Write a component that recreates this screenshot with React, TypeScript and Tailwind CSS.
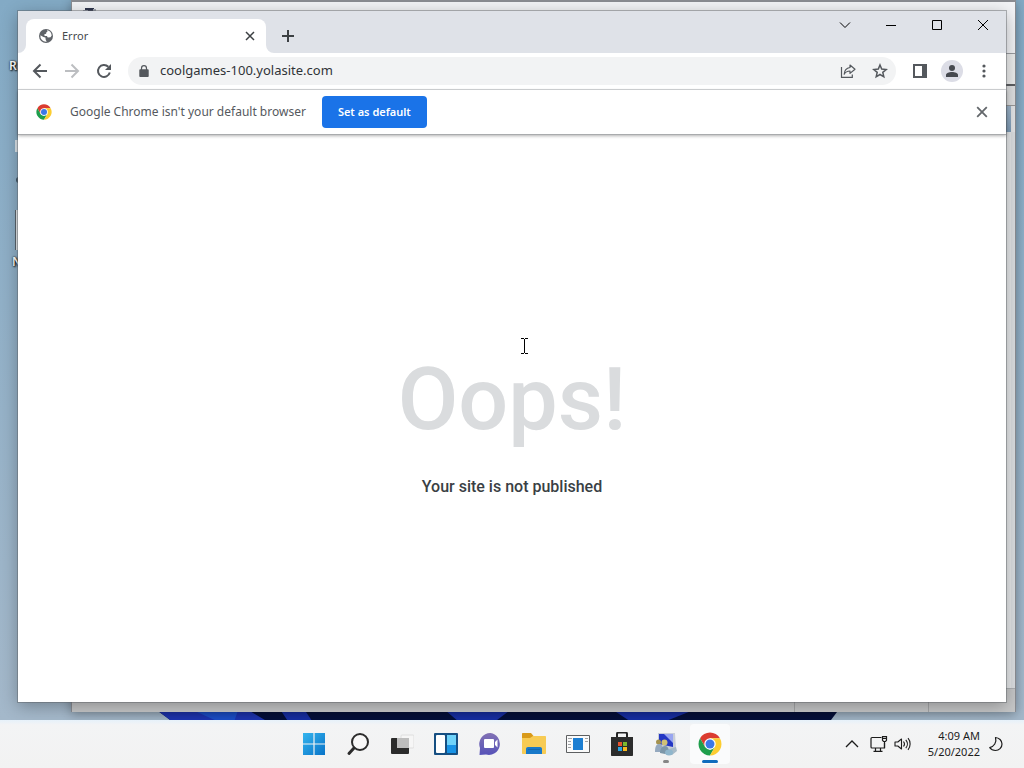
import React, { useState } from 'react';

const ChromeLogo: React.FC<{ className?: string }> = ({ className }) => (
  <svg viewBox="0 0 48 48" className={className} aria-hidden="true">
    <path d="M4.100 12.500A23 23 0 0 1 43.900 12.500H24L14 29.700z" fill="#db3c30" />
    <path d="M4.100 12.500L14 29.700 24 35.500l10-5.800L24 47A23 23 0 0 1 4.100 12.500z" fill="#1e9e4c" />
    <path d="M43.900 12.500A23 23 0 0 1 24 47l10-17.300L24 12.500z" fill="#fccd31" />
    <circle cx="24" cy="24" r="11.500" fill="#fff" />
    <circle cx="24" cy="24" r="9" fill="#3b78e7" />
  </svg>
);

const GlobeIcon = () => (
  <svg viewBox="0 0 16 16" className="h-4 w-4" aria-hidden="true">
    <circle cx="8" cy="8" r="7" fill="#5f6368" />
    <path d="M2.400 7.200L5.400 9l2 .6.300 2.200 1 1.900a5.700 5.700 0 0 1-6.300-6.500z" fill="#fff" />
    <path d="M8.800 2.300a5.700 5.700 0 0 1 4.900 5.200l-1.200 1.700-2.700.200-.900-1.300-2.300-.2-.300-1.700 1.800-.5.300-1.500 1.100-.500z" fill="#fff" />
  </svg>
);

const CloseIcon: React.FC<{ className?: string }> = ({ className }) => (
  <svg viewBox="0 0 10 10" className={className} fill="none" stroke="currentColor" aria-hidden="true">
    <path d="M1 1l8 8M9 1L1 9" />
  </svg>
);

const WindowControls = () => (
  <div className="flex h-7 text-black">
    <button aria-label="Search tabs" className="flex w-[46px] items-center justify-center">
      <svg viewBox="0 0 12 12" className="h-3 w-3" fill="none" stroke="currentColor">
        <path d="M1 3.500l5 5 5-5" />
      </svg>
    </button>
    <button aria-label="Minimize" className="flex w-[46px] items-center justify-center">
      <svg viewBox="0 0 12 12" className="h-3 w-3" stroke="currentColor">
        <path d="M1 6.500h10" />
      </svg>
    </button>
    <button aria-label="Maximize" className="flex w-[46px] items-center justify-center">
      <svg viewBox="0 0 12 12" className="h-3 w-3" fill="none" stroke="currentColor">
        <path d="M1.500 1.500h9v9h-9z" />
      </svg>
    </button>
    <button aria-label="Close" className="flex w-[46px] items-center justify-center">
      <svg viewBox="0 0 12 12" className="h-3 w-3" fill="none" stroke="currentColor">
        <path d="M1 1l10 10M11 1L1 11" />
      </svg>
    </button>
  </div>
);

const TabStrip = () => (
  <div className="flex h-[42px] shrink-0 items-start bg-[#dfe2e8] pl-2">
    <div className="relative mt-2 flex h-[34px] w-60 items-center rounded-t-lg bg-white px-3">
      <svg viewBox="0 0 8 8" className="absolute bottom-0 -left-2 h-2 w-2" fill="#fff">
        <path d="M8 0v8H0a8 8 0 0 0 8-8z" />
      </svg>
      <svg viewBox="0 0 8 8" className="absolute -right-2 bottom-0 h-2 w-2" fill="#fff">
        <path d="M0 0v8h8a8 8 0 0 1-8-8z" />
      </svg>
      <GlobeIcon />
      <span className="ml-2 flex-1 text-[11px] text-[#45494d]">Error</span>
      <button aria-label="Close tab" className="-mr-1 flex h-4 w-4 items-center justify-center text-[#3c4043]">
        <CloseIcon className="h-[10px] w-[10px] stroke-[1.5]" />
      </button>
    </div>
    <button aria-label="New tab" className="mt-[11px] ml-2 flex h-7 w-7 items-center justify-center text-[#3c4043]">
      <svg viewBox="0 0 14 14" className="h-[14px] w-[14px]" stroke="currentColor" strokeWidth="2">
        <path d="M7 1v12M1 7h12" />
      </svg>
    </button>
    <div className="flex-1" />
    <WindowControls />
  </div>
);

const Toolbar: React.FC = () => {
  const [url, setUrl] = useState('coolgames-100.yolasite.com');

  return (
    <div className="flex h-[37px] shrink-0 items-center border-b border-[#d5d7da] bg-white px-[6px] text-[#54585d]">
      <button aria-label="Back" className="flex w-8 justify-center">
        <svg viewBox="0 0 16 16" className="h-4 w-4" fill="none" stroke="currentColor" strokeWidth="2">
          <path d="M15 8H2.500M8.500 1.500L2 8l6.500 6.500" />
        </svg>
      </button>
      <button aria-label="Forward" className="flex w-8 justify-center text-[#bcbec1]">
        <svg viewBox="0 0 16 16" className="h-4 w-4" fill="none" stroke="currentColor" strokeWidth="2">
          <path d="M1 8h12.500M7.500 1.500L14 8l-6.500 6.500" />
        </svg>
      </button>
      <button aria-label="Reload" className="flex w-8 justify-center">
        <svg viewBox="0 0 16 16" className="h-4 w-4" fill="none" stroke="currentColor" strokeWidth="2">
          <path d="M13.800 9.600A6 6 0 1 1 12.300 3.800" />
          <path d="M15 1v6H9z" fill="currentColor" stroke="none" />
        </svg>
      </button>
      <div className="mx-2 flex h-7 flex-1 items-center rounded-full bg-[#f2f3f4]">
        <span className="flex w-8 justify-center">
          <svg viewBox="0 0 12 14" className="h-3 w-3" fill="currentColor" aria-hidden="true">
            <path d="M10.500 5H9.600V3.700a3.600 3.600 0 0 0-7.200 0V5h-.9C.9 5 .5 5.500.5 6v7c0 .6.4 1 1 1h9c.6 0 1-.4 1-1V6c0-.5-.4-1-1-1zM3.800 5V3.700a2.200 2.200 0 0 1 4.400 0V5z" />
          </svg>
        </span>
        <input
          type="text"
          aria-label="Address and search bar"
          value={url}
          onChange={(e) => setUrl(e.target.value)}
          className="min-w-0 flex-1 bg-transparent text-[13px] text-[#303438] outline-none"
        />
        <button aria-label="Share" className="flex w-8 justify-center">
          <svg viewBox="0 0 16 16" className="h-4 w-4" fill="none" stroke="currentColor" strokeWidth="1.200">
            <path d="M1.500 4v10.400h10.800V11.500" />
            <path d="M10 2l5 4.200-5 4.200V8C7.200 8 5.400 9 4.200 11.200 4.400 7.600 6.500 5 10 4.500z" strokeLinejoin="round" />
          </svg>
        </button>
        <button aria-label="Bookmark this tab" className="flex w-8 justify-center">
          <svg viewBox="0 0 16 16" className="h-4 w-4" fill="none" stroke="currentColor" strokeWidth="1.500">
            <path d="M8 2l1.700 4.100 4.500.4-3.400 2.900 1 4.400L8 11.500l-3.800 2.300 1-4.400L1.800 6.500l4.500-.4z" />
          </svg>
        </button>
      </div>
      <button aria-label="Side panel" className="flex w-8 justify-center">
        <svg viewBox="0 0 16 16" className="h-4 w-4" fill="none" stroke="currentColor" strokeWidth="2">
          <path d="M2 2h12v12H2z" />
          <path d="M10 2h4v12h-4z" fill="currentColor" stroke="none" />
        </svg>
      </button>
      <button aria-label="Profile" className="mx-[5px] flex h-[22px] w-[22px] items-center justify-center rounded-full bg-[#dcdde6]">
        <svg viewBox="0 0 14 14" className="h-[14px] w-[14px]" fill="#46494f">
          <circle cx="7" cy="4" r="3" />
          <path d="M1 13v-2c0-2 3-3 6-3s6 1 6 3v2z" />
        </svg>
      </button>
      <button aria-label="Menu" className="flex w-8 justify-center">
        <svg viewBox="0 0 16 16" className="h-4 w-4" fill="currentColor">
          <circle cx="8" cy="3" r="1.600" />
          <circle cx="8" cy="8" r="1.600" />
          <circle cx="8" cy="13" r="1.600" />
        </svg>
      </button>
    </div>
  );
};

const DefaultBrowserBar: React.FC<{ onClose: () => void }> = ({ onClose }) => (
  <div className="z-10 flex h-[45px] shrink-0 items-center border-b border-[#a9abad] bg-white px-[18px] text-[#55595e] shadow-[0_1px_3px_rgba(0,0,0,0.3)]">
    <ChromeLogo className="h-4 w-4" />
    <p className="ml-[18px] text-xs">Google Chrome isn't your default browser</p>
    <button className="ml-4 h-8 rounded bg-[#1a73e8] px-4 text-[11px] font-semibold text-white">Set as default</button>
    <div className="flex-1" />
    <button aria-label="Close infobar" onClick={onClose} className="flex h-3 w-3 items-center justify-center text-[#63676b]">
      <CloseIcon className="h-3 w-3 stroke-[1.5]" />
    </button>
  </div>
);

const BrowserWindow: React.FC = () => {
  const [showBar, setShowBar] = useState(true);

  return (
    <div className="absolute top-[11px] right-[18px] bottom-[18px] left-[18px] flex flex-col bg-white shadow-[0_0_0_1px_rgba(90,95,100,0.45),0_4px_16px_rgba(0,0,0,0.3)]">
      <TabStrip />
      <Toolbar />
      {showBar && <DefaultBrowserBar onClose={() => setShowBar(false)} />}
      <main className="relative flex flex-1 flex-col items-center justify-center gap-8 pt-4 font-['Roboto',sans-serif] font-medium">
        <h1 className="text-[88px] leading-[88px] text-[#dadcde]">Oops!</h1>
        <p className="text-base text-[#3a3f44]">Your site is not published</p>
        {/* text cursor */}
        <svg viewBox="0 0 8 16" className="absolute top-[203px] left-1/2 ml-2 h-4 w-2" fill="none" stroke="#000" shapeRendering="crispEdges">
          <path d="M1 .5h3M5 .5h3M4.500 1v14M1 15.500h3M5 15.500h3" />
        </svg>
      </main>
    </div>
  );
};

// Window that sits behind the browser, only its edges are visible
const BackWindow = () => (
  <div className="absolute top-0 right-2 bottom-2 left-[71px] flex flex-col border-t-2 border-r border-l border-[#8a8c92] bg-[#e4e6e8] shadow-[0_2px_10px_rgba(0,0,0,0.3)]">
    <div className="h-[52px] shrink-0 border-b border-[#9a9ca0] bg-[#f2f3f6] pl-[11px]">
      <svg viewBox="0 0 14 10" className="mt-[5px] h-[10px] w-[14px]">
        <path d="M2 1h9v3H2z" fill="#30364e" />
        <path d="M0 3h5v3H0z" fill="#9aa0ae" />
        <path d="M10 2h3v4h-3z" fill="#a5a9b4" />
      </svg>
    </div>
    <div className="h-[30px] shrink-0 bg-[#eceded]" />
    <div className="h-[22px] shrink-0 border-t-2 border-b border-t-[#5d5f62] border-b-[#999] bg-[#dfe0e1]" />
    <div className="mr-1 h-[26px] shrink-0 bg-linear-to-b from-[#9fb6cb] to-[#7f9db8]" />
    <div className="flex-1 border-r-4 border-[#dcdfe2] bg-[#e6e8ea]" />
    <div className="flex h-6 shrink-0 items-end border-t border-[#adb0b3] bg-[#c6c7c8]">
      <div className="h-[10px] flex-1 border-r border-[#a5a6a8]" />
      <div className="h-[10px] w-[134px] border-r border-[#a5a6a8]" />
      <div className="w-[86px]" />
    </div>
  </div>
);

const Desktop = () => (
  <div className="relative min-h-0 flex-1 overflow-hidden bg-linear-to-b from-[#83aac5] to-[#a4b8ca]">
    {/* wallpaper bloom */}
    <svg viewBox="0 0 680 12" preserveAspectRatio="none" className="absolute bottom-0 left-[15%] h-3 w-[67%]">
      <path d="M0 0h680l-9 12H16z" fill="#05103c" />
      <path d="M0 0h90l20 12H16z" fill="#1e35b4" />
      <path d="M34 0h50l-4 12H60z" fill="#1d50cc" />
      <path d="M124 0h24l8 12h-24zM286 0h70l-16 12h-40zM452 0h88l-30 12h-40z" fill="#1830a8" />
    </svg>
    {/* shortcuts mostly covered by the browser */}
    <div className="absolute top-[58px] left-[9px] text-xs leading-4 font-semibold text-white [text-shadow:0_0_2px_#000,1px_1px_2px_#000]">R</div>
    <div className="absolute top-[140px] left-[15px] h-3 w-1 bg-[#dce4ea]" />
    <div className="absolute top-[177px] left-4 h-[6px] w-[6px] rounded-full bg-[#3f5465]" />
    <div className="absolute top-[210px] left-[15px] h-10 w-4 border-l border-[#59636b] bg-[#e4e7ea]" />
    <div className="absolute top-[254px] left-[12px] text-xs leading-4 font-semibold text-white [text-shadow:0_0_2px_#000,1px_1px_2px_#000]">N</div>
    <BackWindow />
    <BrowserWindow />
  </div>
);

const StartIcon = () => (
  <svg viewBox="0 0 24 24" className="h-6 w-6">
    <defs>
      <linearGradient id="start" x1="0" y1="0" x2="1" y2="1">
        <stop offset="0" stopColor="#35b5ee" />
        <stop offset="1" stopColor="#0873c8" />
      </linearGradient>
    </defs>
    <path d="M1 1h22v22H1z" fill="url(#start)" />
    <path d="M12 0v24M0 12h24" stroke="#f3f3f3" strokeWidth="1.200" />
  </svg>
);

const SearchIcon = () => (
  <svg viewBox="0 0 24 24" className="h-6 w-6" fill="none" stroke="#2c2c2c" strokeLinecap="round">
    <circle cx="14" cy="10" r="8" strokeWidth="2" fill="#f8f8f8" />
    <path d="M8 16l-5 5.500" strokeWidth="3" />
  </svg>
);

const TaskViewIcon = () => (
  <svg viewBox="0 0 24 24" className="h-6 w-6">
    <rect x="11" y="3" width="13" height="13" rx="1" fill="#f6f6f6" stroke="#dedede" />
    <rect x="1" y="6" width="18" height="16" rx="1" fill="#2b2b2b" />
    <path d="M7 6h12v10H7z" fill="#bdbdbd" />
  </svg>
);

const WidgetsIcon = () => (
  <svg viewBox="0 0 24 24" className="h-6 w-6">
    <rect x="0" y="1" width="24" height="22" rx="1" fill="#164f82" />
    <rect x="2" y="3" width="9" height="18" rx="1" fill="#fff" />
    <path d="M13 3h9v10h-9z" fill="#6fd3fa" />
    <path d="M13 13h9v8h-9z" fill="#1893e6" />
  </svg>
);

const ChatIcon = () => (
  <svg viewBox="0 0 24 24" className="h-6 w-6">
    <defs>
      <linearGradient id="chat" x1="0" y1="0" x2="0" y2="1">
        <stop offset="0" stopColor="#8272b4" />
        <stop offset="1" stopColor="#5652b8" />
      </linearGradient>
    </defs>
    <path d="M12.500 1A11 11 0 1 1 8 22.500L1.500 23l.5-7A11 11 0 0 1 12.500 1z" fill="url(#chat)" />
    <rect x="6" y="7" width="10" height="9" rx="1" fill="#fff" />
    <path d="M17 10l2.500-2.500v8L17 13z" fill="#fff" />
  </svg>
);

const FolderIcon = () => (
  <svg viewBox="0 0 24 24" className="h-6 w-6">
    <path d="M0 2c0-.6.4-1 1-1h8l2.500 3v4H0z" fill="#d99a1a" />
    <path d="M0 6h8l3-2h12c.6 0 1 .4 1 1v16c0 .6-.4 1-1 1H1c-.6 0-1-.4-1-1z" fill="#f7cb54" />
    <path d="M4 22v-5c0-1.200.8-2 2-2h12c1.200 0 2 .8 2 2v5z" fill="#1879c9" />
    <path d="M6 17h12v1H6z" fill="#1668ad" />
  </svg>
);

const RunIcon = () => (
  <svg viewBox="0 0 24 24" className="h-6 w-6">
    <path d="M.5 3.500h23v17H.5z" fill="#fafafa" stroke="#5d5f61" />
    <path d="M7 6h10v12H7z" fill="#1c7ed2" />
    <path d="M2 6.500h4M2 9.500h3M2 12.500h3M2 15.500h3M19 6.500h3M19 9.500h3" stroke="#9fa2a5" />
  </svg>
);

const StoreIcon = () => (
  <svg viewBox="0 0 24 24" className="h-6 w-6">
    <path d="M7 7V2c0-1 .5-1.500 1.500-1.500h7C16.500.5 17 1 17 2v5" fill="none" stroke="#242424" strokeWidth="2" />
    <path d="M1 5h22v18c0 .6-.4 1-1 1H2c-.6 0-1-.4-1-1z" fill="#2c2c2c" />
    <path d="M8 10h4v4H8z" fill="#e8532e" />
    <path d="M13 10h4v4h-4z" fill="#7bb82e" />
    <path d="M8 15h4v4H8z" fill="#2ba3e2" />
    <path d="M13 15h4v4h-4z" fill="#f8b91f" />
  </svg>
);

const UsersIcon = () => (
  <svg viewBox="0 0 24 24" className="h-6 w-6">
    <path d="M4 1l17 0 1 16-6 2-12-5z" fill="#c8cdd8" />
    <path d="M5 2l14 0v13L5 12z" fill="#2437c4" />
    <path d="M10 2h9v9z" fill="#98a5f0" />
    <path d="M15 17l7-2 1 4-5 4-6-1z" fill="#a7bac7" />
    <circle cx="4.500" cy="10" r="2.500" fill="#a4924f" />
    <path d="M1 20c0-5 1-8 4-8s4 3 4 8z" fill="#95a9bf" />
    <circle cx="10.500" cy="10.500" r="3" fill="#d0c176" />
    <path d="M6 21c0-4 2-7 5-7s4 3 4 7l-4 1z" fill="#7d97a9" />
    <ellipse cx="15" cy="20.500" rx="4" ry="3" fill="#8fb6cc" />
  </svg>
);

const apps = [
  { name: 'Start', icon: <StartIcon /> },
  { name: 'Search', icon: <SearchIcon /> },
  { name: 'Task view', icon: <TaskViewIcon /> },
  { name: 'Widgets', icon: <WidgetsIcon /> },
  { name: 'Chat', icon: <ChatIcon /> },
  { name: 'File Explorer', icon: <FolderIcon /> },
  { name: 'Run', icon: <RunIcon /> },
  { name: 'Store', icon: <StoreIcon /> },
  { name: 'Users', icon: <UsersIcon />, running: true },
  { name: 'Google Chrome', icon: <ChromeLogo className="h-6 w-6" />, active: true },
];

const Taskbar = () => (
  <div className="flex h-12 shrink-0 items-center bg-linear-to-b from-[#e6f1fa] via-[#f3f4f5] via-10% to-[#f2f2f2] px-5">
    <div className="flex-1" />
    <div className="flex gap-1">
      {apps.map((app) => (
        <button
          key={app.name}
          aria-label={app.name}
          className={`relative flex h-10 w-10 items-center justify-center rounded ${app.active ? 'bg-[#fafbfc]' : ''}`}
        >
          {app.icon}
          {app.running && <span className="absolute bottom-px h-[3px] w-[6px] rounded-full bg-[#858585]" />}
          {app.active && <span className="absolute bottom-px h-[3px] w-4 rounded-full bg-[#0f6cbd]" />}
        </button>
      ))}
    </div>
    <div className="flex flex-1 items-center justify-end gap-2 text-[#1c1c1c]">
      <button aria-label="Show hidden icons" className="mr-[2px]">
        <svg viewBox="0 0 16 16" className="h-4 w-4" fill="none" stroke="currentColor" strokeWidth="1.300">
          <path d="M2 11l6-6 6 6" />
        </svg>
      </button>
      <button aria-label="Network and volume" className="mr-2 flex gap-[6px]">
        <svg viewBox="0 0 18 18" className="h-[18px] w-[18px]" fill="none" stroke="currentColor" strokeWidth="1.200">
          <path d="M11.500 2.500H2c-.6 0-1 .4-1 1V12c0 .6.400 1 1 1h12.500V8M5.500 13v3M10.500 13v3M3.500 16.400h9" />
          <path d="M12.500 1.600h4v3.600l-1 1.300h-2l-1-1.300zM14.500 6.500V13M12.500 3.500h4" />
        </svg>
        <svg viewBox="0 0 18 18" className="h-[18px] w-[18px]" fill="none" stroke="currentColor" strokeWidth="1.100">
          <path d="M1 7v4h2.800L7.500 14V4L3.800 7zM9.500 6.500a4 4 0 0 1 0 5M11.800 4.800a6.500 6.500 0 0 1 0 8.400M14 3.200a9 9 0 0 1 0 11.600" strokeLinejoin="round" />
        </svg>
      </button>
      <button className="text-right text-[11px] leading-4">
        <span className="block">4:09 AM</span>
        <span className="block">5/20/2022</span>
      </button>
      <button aria-label="Focus assist">
        <svg viewBox="0 0 16 16" className="h-4 w-4" fill="none" stroke="currentColor" strokeWidth="1.200">
          <path d="M7.500 1.500c3.500.2 6.500 3 6.500 6.500 0 3.800-3 6.500-6.500 6.500-2.300 0-4.500-1-5.800-2.800C6 10.500 9 6.500 7.500 1.500z" strokeLinejoin="round" />
        </svg>
      </button>
    </div>
  </div>
);

const App: React.FC = () => {
  return (
    <div className="flex h-screen flex-col overflow-hidden font-['Noto_Sans','Open_Sans',sans-serif]">
      <Desktop />
      <Taskbar />
    </div>
  );
};

export default App;
